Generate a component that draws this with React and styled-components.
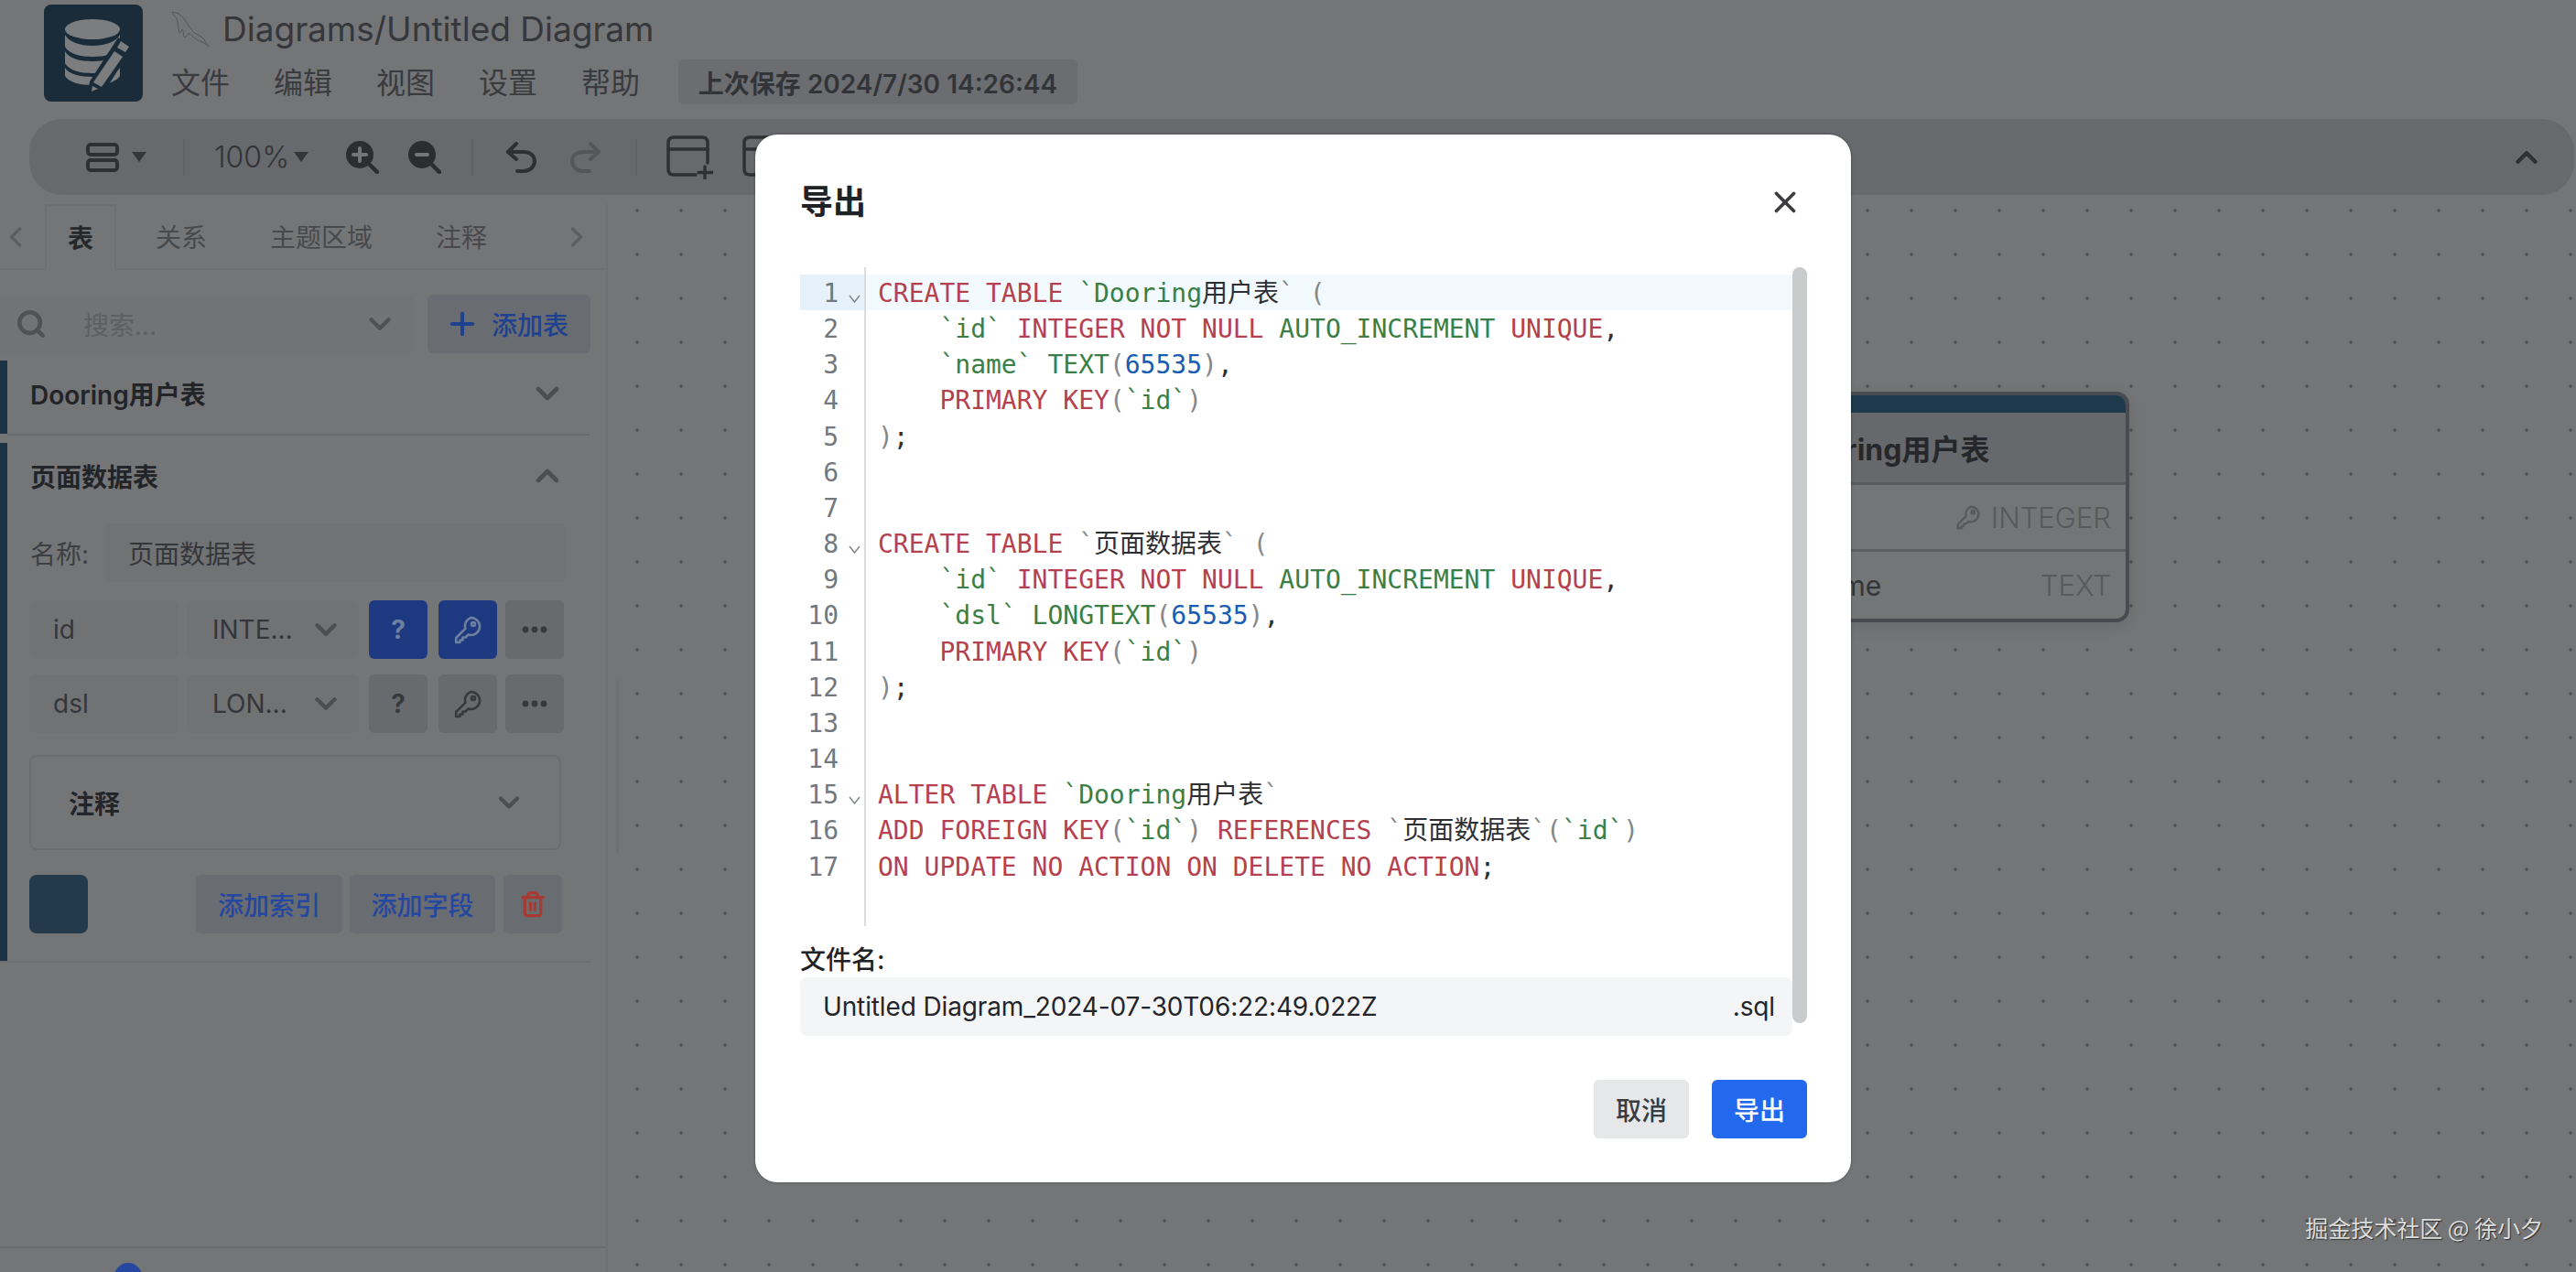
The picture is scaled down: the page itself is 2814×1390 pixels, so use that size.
import React from 'react';
import styled, { createGlobalStyle } from 'styled-components';
import { ChevronDown, ChevronUp, ChevronLeft, ChevronRight, Plus, Search, Trash2, X } from 'lucide-react';

const UI = '"Inter", "Noto Sans CJK SC", sans-serif';
const MONO = '"DejaVu Sans Mono", "Noto Sans CJK SC", monospace';

const Global = createGlobalStyle`
  html, body { margin: 0; padding: 0; background: #747577; }
  * { box-sizing: border-box; }
`;

const Page = styled.div`
  position: relative; width: 2814px; height: 1390px; overflow: hidden;
  display: flex; flex-direction: column; background: #747577; font-family: ${UI}; color: #35363a;
`;
const Header = styled.header`display: flex; height: 130px; padding: 5px 0 0 48px; gap: 31px;`;
const Logo = styled.div`width: 108px; height: 106px; border-radius: 8px; background: #1a2c3a; display: flex;`;
const HeaderInfo = styled.div`display: flex; flex-direction: column;`;
const TitleRow = styled.div`display: flex; align-items: center; gap: 14px; height: 54px;`;
const DocTitle = styled.div`font-size: 37px; color: #36373b; line-height: 46px; white-space: nowrap;`;
const MenuRow = styled.div`display: flex; align-items: center; height: 53px; margin-top: 4px;`;
const MenuItem = styled.div`font-size: 32px; width: 112px; padding-top: 2px; color: #3a3b3f; line-height: 44px; white-space: nowrap;`;
const SavedPill = styled.div`
  margin-left: -6px; height: 49px; width: 436px; border-radius: 6px; background: #6b6d70;
  display: flex; align-items: center; justify-content: center;
  font-size: 28px; font-weight: 600; color: #333438; white-space: nowrap;
`;

const Toolbar = styled.div`
  height: 83px; margin: 0 2px 0 32px; padding: 0 33px 0 62px; border-radius: 36px; background: #68696d;
  display: flex; align-items: center; color: #36373b; flex: none;
`;
const ToolItem = styled.div`display: flex; align-items: center; margin-left: ${p => p.$ml || 0}px; color: ${p => p.$c || 'inherit'};`;
const ToolDivider = styled.div`width: 2px; height: 40px; background: #606165; margin-left: ${p => p.$ml}px;`;
const Zoom100 = styled.div`font-size: 32px; font-weight: 300; color: #333438; width: 79px; margin-left: ${p => p.$ml}px; white-space: nowrap;`;
const Caret = styled.div`
  width: 0; height: 0; border-left: 8px solid transparent; border-right: 8px solid transparent; border-top: 11px solid #35363a;
  margin-left: ${p => p.$ml}px;
`;
const PushRight = styled.div`margin-left: auto; display: flex; color: #2f3034;`;

const Main = styled.div`flex: 1; display: flex; min-height: 0;`;
const Sidebar = styled.aside`width: 664px; flex: none; margin-top: 10px; border-right: 2px solid #6e6f71; display: flex; flex-direction: column;`;
const TabStrip = styled.div`height: 72px; flex: none; border-bottom: 2px solid #6e6f71; display: flex; align-items: stretch; position: relative; padding-left: 49px; gap: 17px;`;
const TabArrow = styled.div`
  position: absolute; top: 18px; ${p => p.$side}: ${p => p.$off}px; color: #5d5e61; display: flex;
`;
const Tab = styled.div`
  padding: 0 ${p => (p.$active ? 23 : 26)}px; display: flex; align-items: center; font-size: 28px; white-space: nowrap;
  font-weight: ${p => (p.$active ? 600 : 400)}; color: ${p => (p.$active ? '#27282b' : '#48494c')};
  ${p => p.$active && 'border: 2px solid #6e6f71; border-bottom: 2px solid #747577; margin-bottom: -2px;'}
`;
const SearchRow = styled.div`display: flex; padding-right: 17px; margin-top: 27px; gap: 16px; flex: none;`;
const SearchBox = styled.div`
  width: 451px; height: 62px; margin-top: 1px; background: #727375; border-radius: 0 6px 6px 0; display: flex; align-items: center; padding-left: 17px;
  color: #515255; position: relative;
`;
const Placeholder = styled.div`margin-left: 40px; font-size: 28px; color: #5e5f62; white-space: nowrap;`;
const SearchChevron = styled.div`position: absolute; right: 17px; top: 12px; color: #505154; display: flex;`;
const AddTable = styled.div`
  width: 178px; height: 64px; background: #696c71; border-radius: 6px; display: flex; align-items: center; padding-left: 19px; gap: 13px;
  color: #1f418f; font-size: 28px; font-weight: 500; white-space: nowrap;
`;
const Item = styled.section`border-left: 8px solid #1c3245; margin-top: ${p => p.$mt}px; flex: none;`;
const ItemHeader = styled.div`
  height: ${p => p.$h}px; display: flex; align-items: center; justify-content: space-between;
  padding: 0 44px ${p => p.$pb || 0}px 25px; font-size: 28px; font-weight: 600; color: #232427; white-space: nowrap;
`;
const ChevronWrap = styled.div`display: flex; color: #4d4e51;`;
const Rule = styled.div`height: 2px; margin-left: ${p => p.$ml}px; width: ${p => p.$w}px; background: ${p => p.$c}; flex: none;`;
const ItemBody = styled.div`padding: 0 0 30px 24px;`;
const NameRow = styled.div`display: flex; align-items: center; height: 64px; margin-top: 16px;`;
const NameLabel = styled.div`font-size: 28px; color: #3e3f42; width: 83px; padding-left: 1px;`;
const Field = styled.div`
  height: 64px; background: #717274; border-radius: 6px; display: flex; align-items: center; font-size: 28px; color: #35363a;
  width: ${p => p.$w}px; padding-left: ${p => p.$pl}px; position: relative; white-space: nowrap; flex: none;
`;
const FieldRow = styled.div`display: flex; align-items: center; gap: 9px; margin-top: ${p => p.$mt}px;`;
const FieldChevron = styled.div`position: absolute; right: 17px; top: 13px; display: flex; color: #4d4e51;`;
const IconBtn = styled.div`
  width: 64px; height: 64px; border-radius: 6px; display: flex; align-items: center; justify-content: center; flex: none;
  background: ${p => (p.$on ? '#1d3a80' : '#686a6e')}; color: ${p => (p.$on ? '#6f7f9f' : '#38393d')};
  font-size: 28px; font-weight: 700; margin-left: ${p => p.$ml || 0}px;
`;
const CommentCard = styled.div`
  margin-top: 24px; width: 581px; height: 104px; border: 2px solid #6c6d6f; border-radius: 8px;
  display: flex; align-items: center; justify-content: space-between; padding: 0 37px 0 41px;
  font-size: 28px; font-weight: 600; color: #242528;
`;
const ActionRow = styled.div`display: flex; align-items: center; margin-top: 27px; width: 582px;`;
const Swatch = styled.div`width: 64px; height: 64px; border-radius: 8px; background: #223a4c; margin-right: auto;`;
const ActionBtn = styled.div`
  height: 64px; width: ${p => p.$w}px; border-radius: 6px; background: #696c70; display: flex; align-items: center; justify-content: center;
  color: ${p => p.$c || '#2447a0'}; font-size: 28px; font-weight: 500; margin-left: ${p => p.$ml || 0}px; white-space: nowrap;
`;
const SideFooter = styled.div`margin-top: auto; height: 28px; border-top: 2px solid #6a6b6d; padding: 16px 0 0 125px; overflow: hidden; flex: none;`;
const Badge = styled.div`width: 30px; height: 30px; border-radius: 50%; background: #2547a0;`;

const Canvas = styled.main`
  flex: 1; margin-top: 10px; position: relative; overflow: hidden;
  background-image: radial-gradient(circle at center, #55565a 0, #55565a 1.6px, transparent 2.2px);
  background-size: 48px 48px; background-position: 8px -17px;
`;
const Resizer = styled.div`position: absolute; left: 9px; top: 520px; width: 3px; height: 190px; background: #6f7072;`;
const TableNode = styled.div`
  position: absolute; left: 1266px; top: 205px; width: 396px; height: 252px; border: 4px solid #4a4b50; border-radius: 14px; overflow: hidden;
  background: #747577; box-shadow: 0 4px 16px rgba(0,0,0,.1);
`;
const NodeBand = styled.div`height: 19px; background: #1e384c;`;
const NodeTitle = styled.div`height: 79px; background: #67686b; border-bottom: 3px solid #5a5b5e; display: flex; align-items: center; padding-left: 19px; font-size: 32px; font-weight: 700; color: #26272a; white-space: nowrap;`;
const NodeRow = styled.div`height: 73px; display: flex; align-items: center; justify-content: space-between; padding: 0 16px 0 43px; font-size: 30px; color: #333438; ${p => p.$rule && 'border-bottom: 3px solid #5f6063;'}`;
const NodeType = styled.div`display: flex; align-items: center; gap: 11px; color: #58595c; font-size: 31px; font-weight: 300;`;

const Watermark = styled.div`
  position: absolute; right: 36px; top: 1323px; font-size: 25px; line-height: 36px; color: #dcdcdc; white-space: nowrap;
  font-family: "Noto Sans CJK SC", sans-serif; text-shadow: 1px 1px 1px #2c2c2c;
`;

const Modal = styled.div`
  position: absolute; left: 825px; top: 147px; width: 1197px; height: 1145px; background: #fff; border-radius: 24px;
  box-shadow: 0 0 3px rgba(0,0,0,.4); padding: 0 48px 48px 49px; display: flex; flex-direction: column; color: #1c1f23;
`;
const ModalHead = styled.div`height: 145px; flex: none; display: flex; align-items: center; justify-content: space-between; padding: 2px 5px 0 0;`;
const ModalTitle = styled.div`font-size: 36px; font-weight: 600; color: #212225; line-height: 50px;`;
const CloseBtn = styled.div`display: flex; color: #3c3d40;`;
const ModalBody = styled.div`position: relative; padding-right: 16px; flex: 1;`;
const ScrollThumb = styled.div`position: absolute; right: 0; top: 0; width: 16px; height: 826px; border-radius: 8px; background: #c8cccd;`;
const Editor = styled.div`display: flex; height: 720px; font-family: ${MONO}; font-size: 28px; line-height: 42px;`;
const Gutter = styled.div`width: 72px; flex: none; padding-top: 8px; border-right: 2px solid #d9dbdd; color: #72787e;`;
const GutterLine = styled.div`height: 39.17px; display: flex; align-items: flex-start; background: ${p => (p.$active ? '#e6f1fb' : 'transparent')};`;
const LineNo = styled.div`width: 42px; text-align: right; flex: none;`;
const Fold = styled.svg`margin: 22px 0 0 11px; flex: none;`;
const Lines = styled.div`flex: 1; min-width: 0; padding-top: 8px;`;
const CodeLine = styled.div`height: 39.17px; padding-left: 13px; white-space: pre; background: ${p => (p.$active ? '#f3faff' : 'transparent')};`;
const TOKEN = { k: '#b5414f', g: '#3b7f46', n: '#1a5cb0', p: '#85888b', d: '#2e2f33' };
const Tok = styled.span`color: ${p => TOKEN[p.$t]};`;
const FileLabel = styled.div`margin-top: 18px; font-size: 28px; font-weight: 500; line-height: 38px; color: #212225;`;
const FileInput = styled.div`
  height: 64px; background: #f4f5f6; border-radius: 8px; display: flex; align-items: center; justify-content: space-between;
  padding: 0 19px 0 25px; font-size: 28px; letter-spacing: -0.13px; color: #24252a; white-space: nowrap;
`;
const Foot = styled.div`display: flex; justify-content: flex-end; gap: 25px; flex: none;`;
const FootBtn = styled.div`
  width: 104px; height: 64px; border-radius: 6px; display: flex; align-items: center; justify-content: center; font-size: 28px; font-weight: 500;
  background: ${p => (p.$primary ? '#2269ee' : '#e5e7e8')}; color: ${p => (p.$primary ? '#fff' : '#3a3b3e')};
`;

const KeyIcon = ({ size = 32, color = 'currentColor' }) => (
  <svg width={size} height={size} viewBox="0 0 32 32" fill="none" stroke={color} strokeWidth="2.6" strokeLinejoin="round" strokeLinecap="round">
    <path d="M19.5 3a9.5 9.5 0 1 1-3 18.5l-3 3h-3v3h-3v2.5H3.2v-5l10.2-10.2A9.5 9.5 0 0 1 19.5 3z" />
    <circle cx="22" cy="10" r="2" />
  </svg>
);

const LogoArt = () => (
  <svg width="108" height="106" viewBox="0 0 108 106">
    <g fill="#7b7d7f">
      <ellipse cx="53" cy="27" rx="30" ry="11" />
      <path d="M23 33c4 8 17 12 30 12s26-4 30-12v13c-4 8-17 11-30 11s-26-3-30-11z" />
      <path d="M23 51c4 8 17 11 30 11s26-3 30-11v13c-4 8-17 11-30 11s-26-3-30-11z" />
      <path d="M23 69c4 7 17 10 30 10s26-3 30-10v9c-4 7-17 10-30 10s-26-3-30-10z" />
    </g>
    <path d="M81 36 L97 46 L66 95 L48 98 L50 84 Z" fill="#1a2c3a" />
    <path d="M84 40 L93 46 L89 52 L80 47 Z" fill="#7b7d7f" />
    <path d="M77 51 L86 57 L63 90 L54 85 Z" fill="#7b7d7f" />
    <path d="M53 89 L59 92 L52 95 Z" fill="#7b7d7f" />
  </svg>
);

const Dolphin = () => (
  <svg width="42" height="40" viewBox="0 0 42 40" fill="none" stroke="#55565a" strokeWidth="1" strokeLinejoin="round">
    <path d="M1 1 C3 2 5 1 8 3 C13 6 16 11 19 16 C21 20 25 24 29 26 C33 28 36 30 37 33 C38 35 40 37 41 39 C38 36 35 35 33 33 C34 35 33 34 31 33 C26 30 22 27 19 24 C17 28 15 30 14 28 C13 25 14 22 12 20 C11 22 10 25 9 24 C7 19 8 13 6 8 C4 6 2 4 1 1 Z" />
  </svg>
);

const ZoomIcon = ({ plus }) => (
  <svg width="36" height="36" viewBox="0 0 36 36">
    <circle cx="15" cy="15" r="15" fill="#2c2d31" />
    <path d="M24 24 L34 34" stroke="#2c2d31" strokeWidth="4.5" strokeLinecap="round" />
    <path d={plus ? 'M15 8 V22 M8 15 H22' : 'M9 15 H21'} stroke="#747577" strokeWidth="4" strokeLinecap="round" />
  </svg>
);

const UndoIcon = ({ flip, color }) => (
  <svg width="34" height="34" viewBox="0 0 34 34" fill="none" stroke={color} strokeWidth="4" strokeLinecap="round" strokeLinejoin="round" style={flip ? { transform: 'scaleX(-1)' } : undefined}>
    <path d="M12 2 L3 11 L12 19" />
    <path d="M3 11 H20 C27 11 32 15 32 21 C32 27 27 32 20 32 H13" />
  </svg>
);

const LayoutIcon = () => (
  <svg width="36" height="32" viewBox="0 0 36 32" fill="none" stroke="#2f3034" strokeWidth="4">
    <rect x="2" y="2" width="32" height="11" rx="3" />
    <rect x="2" y="19" width="32" height="11" rx="3" />
  </svg>
);

const AddTableIcon = () => (
  <svg width="51" height="48" viewBox="0 0 51 48" fill="none" stroke="#2f3034" strokeWidth="3.5" strokeLinecap="round">
    <path d="M45 30 V8 C45 4 43 2 39 2 H8 C4 2 2 4 2 8 V37 C2 41 4 43 8 43 H32" />
    <path d="M2 15 H45" />
    <path d="M42 34 V47 M35 40.5 H50" />
  </svg>
);

const MoreDots = () => (
  <svg width="28" height="8" viewBox="0 0 28 8" fill="#38393d">
    <circle cx="4" cy="4" r="3.4" /><circle cx="14" cy="4" r="3.4" /><circle cx="24" cy="4" r="3.4" />
  </svg>
);

const B = ({ children }) => <Tok $t="d">{children}</Tok>;
const K = ({ children }) => <Tok $t="k">{children}</Tok>;
const G = ({ children }) => <Tok $t="g">{children}</Tok>;
const N = ({ children }) => <Tok $t="n">{children}</Tok>;
const P = ({ children }) => <Tok $t="p">{children}</Tok>;

const CODE = [
  <><K>CREATE TABLE</K> <G>`Dooring</G><B>用户表</B><P>`</P> <P>(</P></>,
  <>{'    '}<G>`id`</G> <K>INTEGER NOT NULL</K> <G>AUTO_INCREMENT</G> <K>UNIQUE</K><B>,</B></>,
  <>{'    '}<G>`name`</G> <G>TEXT</G><P>(</P><N>65535</N><P>)</P><B>,</B></>,
  <>{'    '}<K>PRIMARY KEY</K><P>(</P><G>`id`</G><P>)</P></>,
  <><P>)</P><B>;</B></>,
  <></>,
  <></>,
  <><K>CREATE TABLE</K> <P>`</P><B>页面数据表</B><P>`</P> <P>(</P></>,
  <>{'    '}<G>`id`</G> <K>INTEGER NOT NULL</K> <G>AUTO_INCREMENT</G> <K>UNIQUE</K><B>,</B></>,
  <>{'    '}<G>`dsl`</G> <G>LONGTEXT</G><P>(</P><N>65535</N><P>)</P><B>,</B></>,
  <>{'    '}<K>PRIMARY KEY</K><P>(</P><G>`id`</G><P>)</P></>,
  <><P>)</P><B>;</B></>,
  <></>,
  <></>,
  <><K>ALTER TABLE</K> <G>`Dooring</G><B>用户表</B><P>`</P></>,
  <><K>ADD FOREIGN KEY</K><P>(</P><G>`id`</G><P>)</P> <K>REFERENCES</K> <P>`</P><B>页面数据表</B><P>`(</P><G>`id`</G><P>)</P></>,
  <><K>ON UPDATE NO ACTION ON DELETE NO ACTION</K><B>;</B></>,
];
const FOLDS = [1, 8, 15];

const Chev = ({ up, size = 38 }) => (up ? <ChevronUp size={size} strokeWidth={2.8} /> : <ChevronDown size={size} strokeWidth={2.8} />);

export default function App() {
  return (
    <Page>
      <Global />
      <Header>
        <Logo><LogoArt /></Logo>
        <HeaderInfo>
          <TitleRow>
            <Dolphin />
            <DocTitle>Diagrams/Untitled Diagram</DocTitle>
          </TitleRow>
          <MenuRow>
            {['文件', '编辑', '视图', '设置', '帮助'].map(m => <MenuItem key={m}>{m}</MenuItem>)}
            <SavedPill>上次保存 2024/7/30 14:26:44</SavedPill>
          </MenuRow>
        </HeaderInfo>
      </Header>
      <Toolbar>
        <ToolItem><LayoutIcon /></ToolItem>
        <Caret $ml={14} />
        <ToolDivider $ml={40} />
        <Zoom100 $ml={32}>100%</Zoom100>
        <Caret $ml={8} />
        <ToolItem $ml={41}><ZoomIcon plus /></ToolItem>
        <ToolItem $ml={32}><ZoomIcon /></ToolItem>
        <ToolDivider $ml={33} />
        <ToolItem $ml={35}><UndoIcon color="#2f3034" /></ToolItem>
        <ToolItem $ml={37}><UndoIcon flip color="#55565a" /></ToolItem>
        <ToolDivider $ml={37} />
        <ToolItem $ml={32}><AddTableIcon /></ToolItem>
        <ToolItem $ml={32}><AddTableIcon /></ToolItem>
        <PushRight><ChevronUp size={38} strokeWidth={2.8} /></PushRight>
      </Toolbar>
      <Main>
        <Sidebar>
          <TabStrip>
            <TabArrow $side="left" $off={-1}><ChevronLeft size={36} strokeWidth={2.2} /></TabArrow>
            <Tab $active>表</Tab>
            <Tab>关系</Tab>
            <Tab>主题区域</Tab>
            <Tab>注释</Tab>
            <TabArrow $side="right" $off={14}><ChevronRight size={36} strokeWidth={2.2} /></TabArrow>
          </TabStrip>
          <SearchRow>
            <SearchBox>
              <Search size={34} strokeWidth={3.2} />
              <Placeholder>搜索...</Placeholder>
              <SearchChevron><Chev /></SearchChevron>
            </SearchBox>
            <AddTable><Plus size={38} strokeWidth={2.6} />添加表</AddTable>
          </SearchRow>
          <Item $mt={8}>
            <ItemHeader $h={80} $pb={8}>Dooring用户表<ChevronWrap><Chev size={40} /></ChevronWrap></ItemHeader>
          </Item>
          <Rule $ml={8} $w={636} $c="#69696b" />
          <Item $mt={8}>
            <ItemHeader $h={72}>页面数据表<ChevronWrap><Chev up size={40} /></ChevronWrap></ItemHeader>
            <ItemBody>
              <NameRow>
                <NameLabel>名称:</NameLabel>
                <Field $w={503} $pl={25}>页面数据表</Field>
              </NameRow>
              <FieldRow $mt={20}>
                <Field $w={163} $pl={26}>id</Field>
                <Field $w={188} $pl={28}>INTE...<FieldChevron><Chev /></FieldChevron></Field>
                <IconBtn $on $ml={2}>?</IconBtn>
                <IconBtn $on $ml={3}><KeyIcon /></IconBtn>
                <IconBtn><MoreDots /></IconBtn>
              </FieldRow>
              <FieldRow $mt={17}>
                <Field $w={163} $pl={26}>dsl</Field>
                <Field $w={188} $pl={28}>LON...<FieldChevron><Chev /></FieldChevron></Field>
                <IconBtn $ml={2}>?</IconBtn>
                <IconBtn $ml={3}><KeyIcon /></IconBtn>
                <IconBtn><MoreDots /></IconBtn>
              </FieldRow>
              <CommentCard>注释<ChevronWrap><Chev size={36} /></ChevronWrap></CommentCard>
              <ActionRow>
                <Swatch />
                <ActionBtn $w={160}>添加索引</ActionBtn>
                <ActionBtn $w={159} $ml={8}>添加字段</ActionBtn>
                <ActionBtn $w={64} $ml={9} $c="#a83a32"><Trash2 size={30} strokeWidth={2.6} /></ActionBtn>
              </ActionRow>
            </ItemBody>
          </Item>
          <Rule $ml={0} $w={646} $c="#6e6f71" />
          <SideFooter><Badge /></SideFooter>
        </Sidebar>
        <Canvas>
          <Resizer />
          <TableNode>
            <NodeBand />
            <NodeTitle>Dooring用户表</NodeTitle>
            <NodeRow $rule>id<NodeType><KeyIcon size={28} color="#58595c" />INTEGER</NodeType></NodeRow>
            <NodeRow>name<NodeType>TEXT</NodeType></NodeRow>
          </TableNode>
        </Canvas>
      </Main>
      <Watermark>掘金技术社区 @ 徐小夕</Watermark>
      <Modal>
        <ModalHead>
          <ModalTitle>导出</ModalTitle>
          <CloseBtn><X size={38} strokeWidth={2.4} /></CloseBtn>
        </ModalHead>
        <ModalBody>
          <ScrollThumb />
          <Editor>
            <Gutter>
              {CODE.map((_, i) => (
                <GutterLine key={i} $active={i === 0}>
                  <LineNo>{i + 1}</LineNo>
                  {FOLDS.includes(i + 1) && (
                    <Fold width="13" height="9" viewBox="0 0 13 9" fill="none" stroke="#80868c" strokeWidth="1.5"><path d="M1 1 L6.5 8 L12 1" /></Fold>
                  )}
                </GutterLine>
              ))}
            </Gutter>
            <Lines>
              {CODE.map((line, i) => <CodeLine key={i} $active={i === 0}>{line}</CodeLine>)}
            </Lines>
          </Editor>
          <FileLabel>文件名:</FileLabel>
          <FileInput><span>Untitled Diagram_2024-07-30T06:22:49.022Z</span><span>.sql</span></FileInput>
        </ModalBody>
        <Foot>
          <FootBtn>取消</FootBtn>
          <FootBtn $primary>导出</FootBtn>
        </Foot>
      </Modal>
    </Page>
  );
}
